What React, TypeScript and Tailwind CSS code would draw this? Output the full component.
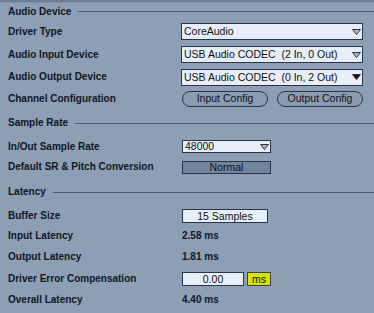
import React from "react";

const font = { fontFamily: '"Liberation Sans", Arial, sans-serif' };

function Arrow({ filled }: { filled?: boolean }) {
  return (
    <svg width="9" height="6" viewBox="0 0 9 6" className="absolute right-[1px] top-1/2 -translate-y-1/2">
      <polygon points="0.5,0.5 8.5,0.5 4.5,5.5" fill={filled ? "#0b0f16" : "#a9b7ca"} stroke="#2a3444" strokeWidth="1" />
    </svg>
  );
}

function Dropdown({ text, w, h, filled }: { text: string; w: string; h: string; filled?: boolean }) {
  return (
    <div className={`relative ${w} ${h} bg-[#e8eef8] border border-[#29344a] flex items-center pl-[2px] text-[10.5px] text-[#111] leading-none whitespace-pre`}>
      <span>{text}</span>
      <Arrow filled={filled} />
    </div>
  );
}

function Header({ title, h }: { title: string; h: string }) {
  return (
    <div className={`${h} flex items-center pl-[8px]`}>
      <span className="text-[10px] font-bold text-[#10161f] leading-none">{title}</span>
      <div className="flex-1 ml-[7px] h-px bg-[#4a596c]" />
    </div>
  );
}

function Row({ label, h, children }: { label: string; h: string; children?: React.ReactNode }) {
  return (
    <div className={`${h} flex items-center pl-[8px]`}>
      <div className="w-[173px] text-[10px] font-bold text-[#10161f] leading-none">{label}</div>
      {children}
    </div>
  );
}

function PillButton({ text }: { text: string }) {
  return (
    <div className="w-[86px] h-[16px] rounded-full border border-[#2a3444] bg-[#8a9cb2] flex items-center justify-center text-[10.5px] text-[#111] leading-none">
      {text}
    </div>
  );
}

function Value({ text }: { text: string }) {
  return <span className="ml-[1px] text-[10px] font-bold text-[#10161f] leading-none">{text}</span>;
}

export default function App() {
  return (
    <div style={font} className="w-[374px] h-[313px] bg-[#8c9fb4] overflow-hidden flex flex-col">
      <div className="h-[3px] bg-[#6c7f96] border-b border-[#7f91a7]" />
      <Header title="Audio Device" h="h-[17px]" />
      <Row label="Driver Type" h="h-[23px]">
        <Dropdown text="CoreAudio" w="w-[182px]" h="h-[17px]" />
      </Row>
      <Row label="Audio Input Device" h="h-[23px]">
        <Dropdown text="USB Audio CODEC  (2 In, 0 Out)" w="w-[182px]" h="h-[17px]" />
      </Row>
      <Row label="Audio Output Device" h="h-[22px]">
        <Dropdown text="USB Audio CODEC  (0 In, 2 Out)" w="w-[182px]" h="h-[17px]" filled />
      </Row>
      <Row label="Channel Configuration" h="h-[21px]">
        <div className="flex gap-[9px] pl-[1px]">
          <PillButton text="Input Config" />
          <PillButton text="Output Config" />
        </div>
      </Row>
      <Header title="Sample Rate" h="h-[28px]" />
      <Row label="In/Out Sample Rate" h="h-[19px]">
        <div className="pl-[1px]">
          <Dropdown text="48000" w="w-[89px]" h="h-[13px]" />
        </div>
      </Row>
      <Row label="Default SR & Pitch Conversion" h="h-[22px]">
        <div className="ml-[1px] w-[89px] h-[13px] bg-[#71849e] border border-[#29344a] flex items-center justify-center text-[10.5px] text-[#111] leading-none">
          Normal
        </div>
      </Row>
      <Header title="Latency" h="h-[28px]" />
      <Row label="Buffer Size" h="h-[20px]">
        <div className="ml-[1px] w-[86px] h-[14px] bg-[#e8eef8] border border-[#29344a] flex items-center justify-center text-[10.5px] text-[#111] leading-none">
          15 Samples
        </div>
      </Row>
      <Row label="Input Latency" h="h-[20px]">
        <Value text="2.58 ms" />
      </Row>
      <Row label="Output Latency" h="h-[22px]">
        <Value text="1.81 ms" />
      </Row>
      <Row label="Driver Error Compensation" h="h-[22px]">
        <div className="ml-[1px] flex gap-[3px]">
          <div className="w-[62px] h-[14px] bg-[#e8eef8] border border-[#29344a] flex items-center justify-center text-[10.5px] text-[#111] leading-none">
            0.00
          </div>
          <div className="w-[24px] h-[14px] bg-[#d8e400] border border-[#3a4450] flex items-center justify-center text-[10.5px] text-[#111] leading-none">
            ms
          </div>
        </div>
      </Row>
      <Row label="Overall Latency" h="h-[19px]">
        <Value text="4.40 ms" />
      </Row>
    </div>
  );
}
